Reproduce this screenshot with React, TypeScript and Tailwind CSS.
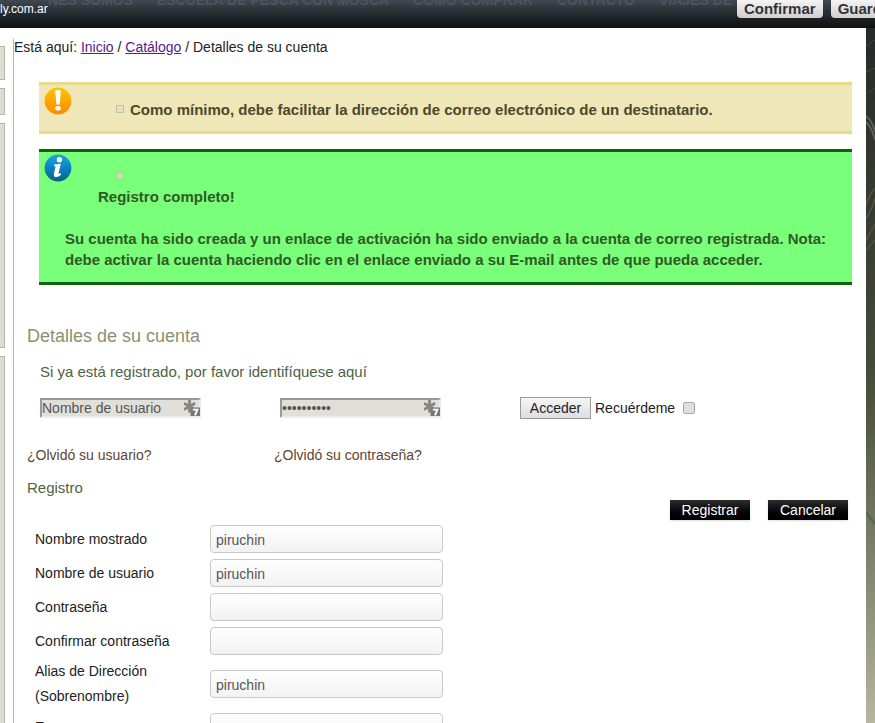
import type { ReactNode } from "react";

const navItems = ["NES SOMOS", "ESCUELA DE PESCA CON MOSCA", "COMO COMPRAR", "CONTACTO", "VIAJES DE"];

const fields = [
  { id: "name", label: "Nombre mostrado", type: "text", value: "piruchin" },
  { id: "username", label: "Nombre de usuario", type: "text", value: "piruchin" },
  { id: "password", label: "Contraseña", type: "password", value: "" },
  { id: "password2", label: "Confirmar contraseña", type: "password", value: "" },
  { id: "alias", label: "Alias de Dirección (Sobrenombre)", type: "text", value: "piruchin" },
  { id: "company", label: "Empresa", type: "text", value: "" },
];

function WarningIcon() {
  return (
    <svg className="mt-0.5 h-7 w-7 shrink-0" viewBox="0 0 28 28" aria-hidden="true">
      <defs>
        <linearGradient id="warn" x1="0" y1="0" x2="0" y2="1">
          <stop offset="0" stopColor="#ffc400" />
          <stop offset="1" stopColor="#ff8a00" />
        </linearGradient>
      </defs>
      <circle cx="14" cy="14" r="13.4" fill="url(#warn)" />
      <path d="M11.2 3.6Q14 2.4 16.8 3.6L15.8 17.4H12.4Z" fill="#fff" />
      <ellipse cx="14" cy="21.2" rx="2.8" ry="2.3" fill="#fff" />
    </svg>
  );
}

function InfoIcon() {
  return (
    <svg className="mt-0.5 h-7 w-7 shrink-0" viewBox="0 0 28 28" aria-hidden="true">
      <defs>
        <linearGradient id="info" x1="0" y1="0" x2="0" y2="1">
          <stop offset="0" stopColor="#1aa7df" />
          <stop offset=".55" stopColor="#087fc2" />
          <stop offset="1" stopColor="#07647f" />
        </linearGradient>
      </defs>
      <circle cx="14" cy="14" r="13.4" fill="url(#info)" />
      <circle cx="15.4" cy="5.8" r="2.7" fill="#fff" />
      <path
        d="M10.2 10.4L16.8 9.8L14.6 19.2Q14.4 20.8 16.8 19L17.2 20.6Q14.2 23.6 11.3 23Q9.3 22.4 10 19.4L11.7 12.5L10 12.2Z"
        fill="#fff"
      />
    </svg>
  );
}

// Marker of the password manager at the right end of a login box
function AutofillIcon() {
  return (
    <svg className="pointer-events-none absolute top-0.5 right-px h-4 w-4" viewBox="0 0 16 16" aria-hidden="true">
      <path d="M5.5 0V12.5M0 3.2L11 9.6M11 3.2L0 9.6" stroke="#858585" strokeWidth="2.8" fill="none" />
      <path d="M8 7.5H16V16H6.5V10Z" fill="#777" />
      <path d="M8.8 9.6H13.4L11 15.4" stroke="#fff" strokeWidth="1.9" fill="none" />
    </svg>
  );
}

function LoginBox({ label, type, value }: { label: string; type: string; value: string }) {
  return (
    <div className="relative mr-[79px] w-[161px] shrink-0">
      <input
        aria-label={label}
        type={type}
        defaultValue={value}
        className="block h-5 w-full border-2 border-t-[#999] border-r-[#ececec] border-b-[#ececec] border-l-[#999] bg-[#e0e0d8] pr-4 text-sm leading-4 text-[#555]"
      />
      <AutofillIcon />
    </div>
  );
}

function BarButton({ children }: { children: ReactNode }) {
  return (
    <button
      type="button"
      className="h-[18px] rounded-b-sm bg-linear-to-b from-[#f4f4f4] to-[#cfcfd2] px-[7px] text-[15px] leading-[18px] font-bold text-[#333]"
    >
      {children}
    </button>
  );
}

function DarkButton({ children }: { children: ReactNode }) {
  return (
    <button type="button" className="h-5 w-20 bg-linear-to-b from-[#2e2e2e] to-black text-sm leading-5 text-white shadow-sm">
      {children}
    </button>
  );
}

function Backdrop() {
  return (
    <div className="w-[9px] shrink-0 overflow-hidden bg-linear-to-b from-[#262b2a] via-[#464c38] via-50% to-[#b7b6a0]">
      <svg width="9" height="700" fill="none" aria-hidden="true">
        <path d="M0 18L9 12M0 44L9 40M0 66L9 60" stroke="#3f4743" />
        <path d="M0 88Q6 92 9 104M0 94Q5 98 9 112" stroke="#5f5f58" strokeWidth="2" />
        <path d="M0 176Q5 164 9 160M0 190Q6 182 9 170M0 212L9 196M0 222L9 212" stroke="#565244" strokeWidth="1.5" />
        <path d="M0 408L9 416M0 484L9 496" stroke="#59624a" strokeWidth="2" />
      </svg>
    </div>
  );
}

export default function App() {
  return (
    <div className="flex h-screen flex-col overflow-hidden bg-white font-['Liberation_Sans',Arial,sans-serif] text-sm text-[#222]">
      <header className="relative flex h-7 shrink-0 justify-between overflow-hidden bg-linear-to-b from-[#414851] via-[#20252b] via-60% to-[#0f100e]">
        <nav className="absolute -top-2 left-12 flex gap-6 text-sm leading-4 font-bold whitespace-nowrap text-[#4e555e]">
          {navItems.map((item) => (
            <span key={item}>{item}</span>
          ))}
        </nav>
        <span className="relative text-xs leading-[18px] text-white">ly.com.ar</span>
        <div className="relative -mr-7 flex gap-2">
          <BarButton>Confirmar</BarButton>
          <BarButton>Guardar</BarButton>
        </div>
      </header>

      <div className="flex min-h-0 flex-1">
        <aside className="flex w-[5px] shrink-0 flex-col gap-2 pt-[18px]">
          <div className="h-[34px] shrink-0 border border-l-0 border-[#b5b5a8] bg-[#ddddd3]" />
          <div className="h-[27px] shrink-0 border border-l-0 border-[#b5b5a8] bg-[#ddddd3]" />
          <div className="h-[225px] shrink-0 border border-l-0 border-[#b5b5a8] bg-[#ddddd3]" />
          <div className="flex-1 border border-b-0 border-l-0 border-[#b5b5a8] bg-[#ddddd3]" />
        </aside>

        <main className="mt-[11px] ml-2 min-w-0 flex-1 border-l border-[#b5b5ac]">
          <nav className="leading-4">
            Está aquí:{" "}
            <a href="#" className="text-[#551a8b] underline">Inicio</a> /{" "}
            <a href="#" className="text-[#551a8b] underline">Catálogo</a> / Detalles de su cuenta
          </nav>

          <div className="mt-[27px] mr-[14px] ml-[25px] space-y-[15px] text-[15px] leading-[21px] font-bold">
            <div className="flex h-[52px] border-y-3 border-[#e6db8c] bg-[#efe7b8] pl-[5px] text-[#4d482b]">
              <WarningIcon />
              <p className="flex items-center gap-1.5 pt-0.5 pl-11">
                <span className="h-2 w-2 border border-[#c3c2a0] bg-[#e4e0c0]" />
                Como mínimo, debe facilitar la dirección de correo electrónico de un destinatario.
              </p>
            </div>

            <div className="border-y-3 border-[#10620f] bg-[#79ff79] pb-3 text-[#2f5a24]">
              <div className="flex pl-[5px]">
                <InfoIcon />
                <div className="pt-[13px] pl-[26px]">
                  <div className="flex h-[21px] items-center pl-[18px]">
                    <span className="h-2 w-2 rounded-xs border border-[#a9d08f] bg-[#b9e6a2]" />
                  </div>
                  <p>Registro completo!</p>
                </div>
              </div>
              <p className="mt-[21px] pr-6 pl-[26px]">
                Su cuenta ha sido creada y un enlace de activación ha sido enviado a la cuenta de correo registrada. Nota:
                debe activar la cuenta haciendo clic en el enlace enviado a su E-mail antes de que pueda acceder.
              </p>
            </div>
          </div>

          <div className="pr-[18px] pl-[13px]">
            <h1 className="mt-10 text-lg leading-[22px] text-[#8c9070]">Detalles de su cuenta</h1>

            <form className="pl-[13px]">
              <h2 className="mt-[15px] text-[15px] leading-5 text-[#4d6345]">
                Si ya está registrado, por favor identifíquese aquí
              </h2>
              <div className="mt-[15px] flex items-center">
                <LoginBox label="Nombre de usuario" type="text" value="Nombre de usuario" />
                <LoginBox label="Contraseña" type="password" value="contraseña" />
                <button
                  type="button"
                  className="h-[22px] w-[71px] border border-[#999] bg-linear-to-b from-[#f6f6f6] to-[#dedede] text-sm leading-5 text-[#222]"
                >
                  Acceder
                </button>
                <label htmlFor="remember" className="ml-1">Recuérdeme</label>
                <input
                  id="remember"
                  type="checkbox"
                  className="ml-2 h-3 w-3 appearance-none rounded-xs border border-[#aaa] bg-[#e0e0e0] checked:bg-[#777]"
                />
              </div>
            </form>

            <div className="mt-[26px] flex leading-5 text-[#5f4433]">
              <a href="#" className="w-[247px]">¿Olvidó su usuario?</a>
              <a href="#">¿Olvidó su contraseña?</a>
            </div>

            <h2 className="mt-[13px] text-[15px] leading-5 text-[#4d6345]">Registro</h2>

            <div className="mt-0.5 flex justify-end gap-[18px]">
              <DarkButton>Registrar</DarkButton>
              <DarkButton>Cancelar</DarkButton>
            </div>

            <form className="mt-0.5 pl-2">
              {fields.map((field) => (
                <div key={field.id} className="flex items-center py-px">
                  <label htmlFor={field.id} className="w-[175px] shrink-0 pr-8 leading-[25px]">
                    {field.label}
                  </label>
                  <input
                    id={field.id}
                    type={field.type}
                    defaultValue={field.value}
                    className="my-0.5 h-7 w-[233px] rounded-sm border border-[#c8c8c8] bg-linear-to-b from-white to-[#f3f2f3] px-[5px] pt-0.5 text-sm text-[#555]"
                  />
                </div>
              ))}
            </form>
          </div>
        </main>

        <Backdrop />
      </div>
    </div>
  );
}
